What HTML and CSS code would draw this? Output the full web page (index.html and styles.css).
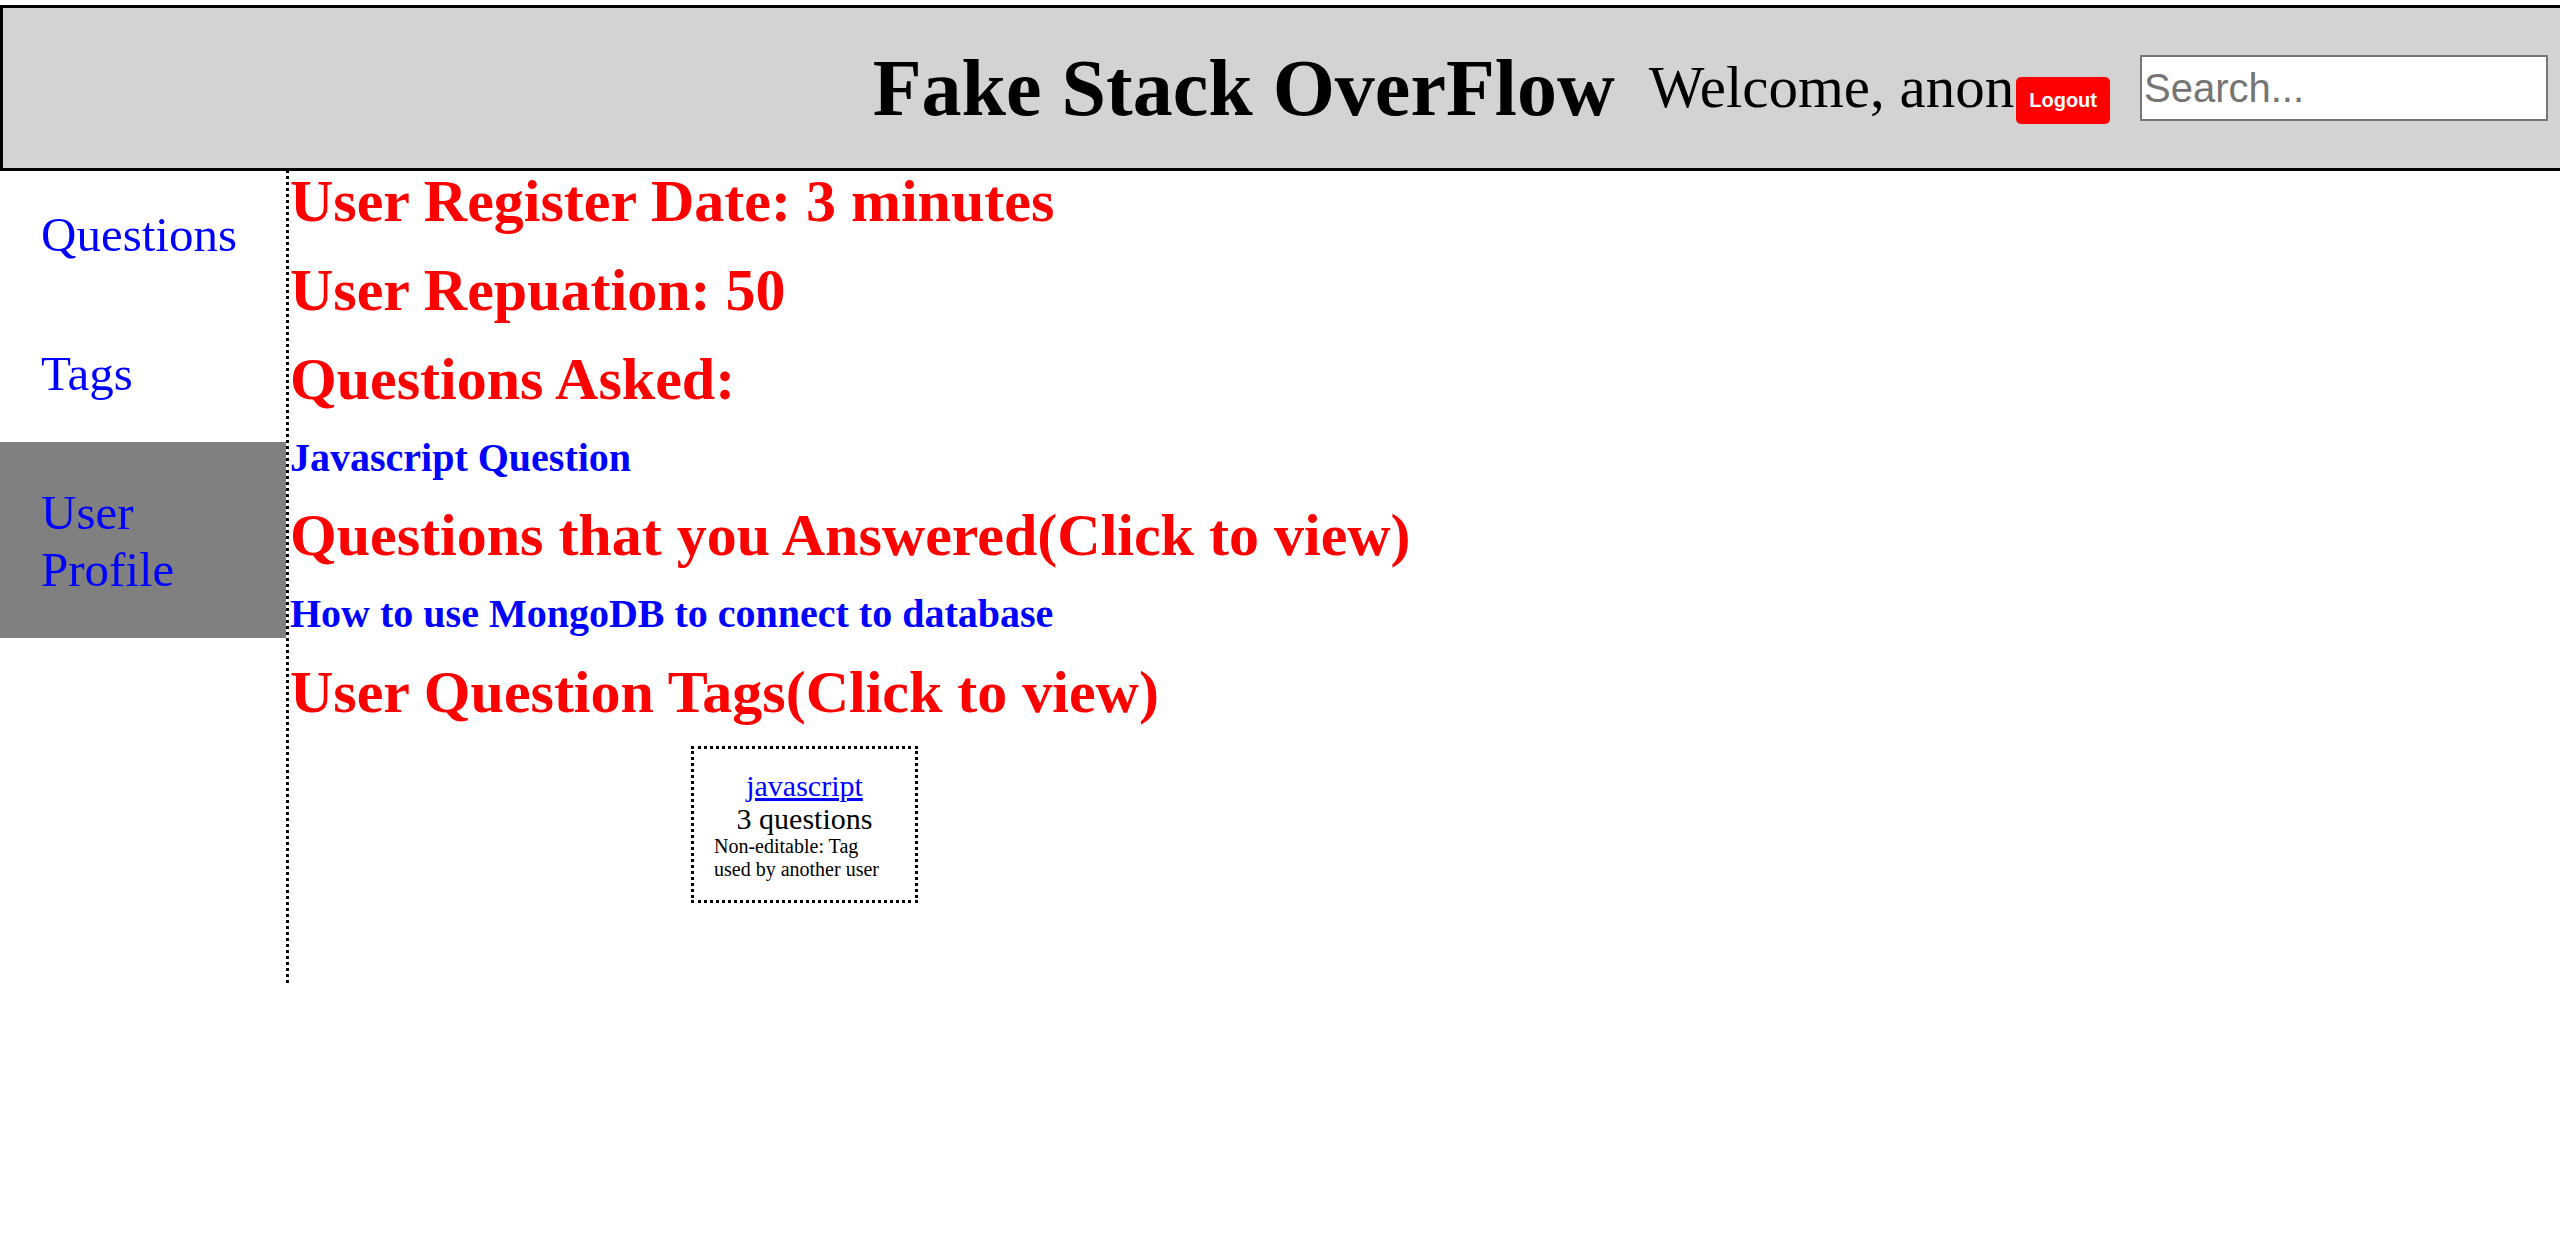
FILE: index.html
```html
<!DOCTYPE html>
<html lang="en">
<head>
<meta charset="utf-8">
<title>Fake Stack OverFlow</title>
<link rel="stylesheet" href="styles.css">
</head>
<body>
<header class="header">
  <h1 class="title">Fake Stack OverFlow</h1>
  <div class="welcome"><span class="welcome-text">Welcome, anon</span><button class="logout">Logout</button></div>
  <input class="search" type="text" placeholder="Search...">
</header>
<div class="page">
  <nav class="sidebar">
    <a class="nav-item" href="#">Questions</a>
    <a class="nav-item" href="#">Tags</a>
    <a class="nav-item active" href="#">User Profile</a>
  </nav>
  <main class="main">
    <h2 class="info">User Register Date: 3 minutes</h2>
    <h2 class="info">User Repuation: 50</h2>
    <h2 class="info">Questions Asked:</h2>
    <a class="q-link" href="#">Javascript Question</a>
    <h2 class="info">Questions that you Answered(Click to view)</h2>
    <a class="q-link" href="#">How to use MongoDB to connect to database</a>
    <h2 class="info last">User Question Tags(Click to view)</h2>
    <div class="tag-card">
      <a class="tag-name" href="#">javascript</a>
      <div class="tag-count">3 questions</div>
      <div class="tag-note">Non-editable: Tag used by another user</div>
    </div>
  </main>
</div>
</body>
</html>
```
FILE: styles.css
```css
html, body {
  margin: 0;
  padding: 0;
  background: #ffffff;
  font-family: "Liberation Serif", "Times New Roman", serif;
  overflow: hidden;
}

.header {
  position: relative;
  z-index: 1;
  box-sizing: border-box;
  width: 2560px;
  height: 166px;
  margin-top: 5px;
  background: #d3d3d3;
  border-top: 3px solid #000;
  border-left: 3px solid #000;
  border-bottom: 3px solid #000;
  display: flex;
  align-items: center;
  justify-content: flex-end;
  padding-right: 12px;
}

.title {
  margin: 0;
  font-size: 80px;
  font-weight: bold;
  color: #000;
  white-space: nowrap;
}

.welcome {
  margin-left: 34px;
  font-size: 59px;
  color: #000;
  white-space: nowrap;
}

.logout {
  margin-left: 2px;
  background: #ff0000;
  color: #ffffff;
  border: none;
  border-radius: 5px;
  padding: 12px 13px;
  font-family: "Liberation Sans", Arial, sans-serif;
  font-weight: bold;
  font-size: 20px;
  line-height: 23px;
}

.search {
  margin: 0 0 0 30px;
  box-sizing: border-box;
  width: 408px;
  height: 66px;
  border: 2px solid #767676;
  padding: 0 2px;
  background: #fff;
  font-family: "Liberation Sans", Arial, sans-serif;
  font-size: 40px;
  color: #000;
}

.search::placeholder {
  color: #757575;
}

.page {
  display: flex;
  margin-top: -7px;
  height: 819px;
}

.sidebar {
  width: 286px;
  flex: none;
  border-right: 3px dotted #000;
  display: flex;
  flex-direction: column;
}

.nav-item {
  display: block;
  padding: 42px 40px 40px 41px;
  font-size: 49px;
  color: #0000ff;
  text-decoration: none;
}

.nav-item.active {
  background: #808080;
}

.main {
  flex: 1;
  padding-left: 1px;
  padding-top: 3px;
  display: flex;
  flex-direction: column;
  align-items: flex-start;
  gap: 20px;
}

.info {
  margin: 0;
  font-size: 60px;
  font-weight: bold;
  color: #ff0000;
  white-space: nowrap;
}

.info.last {
  margin-top: 1px;
}

.q-link {
  font-size: 40px;
  font-weight: bold;
  color: #0000ff;
  text-decoration: none;
  white-space: nowrap;
}

.tag-card {
  margin-left: 401px;
  margin-top: -1px;
  width: 181px;
  padding: 20px;
  border: 3px dotted #000;
  text-align: center;
}

.tag-name {
  display: inline-block;
  font-size: 30px;
  line-height: 33px;
  color: #0000ff;
  text-decoration: underline;
}

.tag-count {
  font-size: 30px;
  line-height: 33px;
  color: #000;
}

.tag-note {
  text-align: left;
  font-size: 20px;
  line-height: 22.5px;
  color: #000;
}
```
